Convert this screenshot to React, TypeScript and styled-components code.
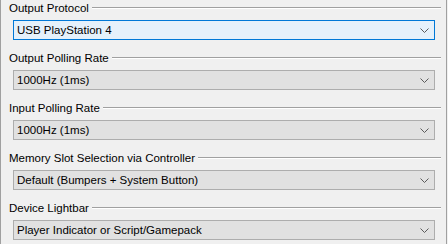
import { FC } from "react"
import styled, { createGlobalStyle } from "styled-components"

type Option = {
	label: string
	value: string
	focused?: boolean
}

type SelectBoxProps = {
	focused?: boolean
}

const options: Option[] = [
	{ label: "Output Protocol", value: "USB PlayStation 4", focused: true },
	{ label: "Output Polling Rate", value: "1000Hz (1ms)" },
	{ label: "Input Polling Rate", value: "1000Hz (1ms)" },
	{ label: "Memory Slot Selection via Controller", value: "Default (Bumpers + System Button)" },
	{ label: "Device Lightbar", value: "Player Indicator or Script/Gamepack" },
]

const Chevron: FC = () => (
	<svg width="9" height="5" viewBox="0 0 9 5">
		<polyline points="0.5,0.5 4.5,4.5 8.5,0.5" fill="none" stroke="#5a5a5a" strokeWidth="1" />
	</svg>
)

const App: FC = () => {
	return (
		<>
			<GlobalStyle />
			<Panel>
				{options.map(opt => (
					<Section key={opt.label}>
						<GroupHeader>
							<GroupLabel>{opt.label}</GroupLabel>
							<Etched />
						</GroupHeader>
						<SelectBox focused={opt.focused}>
							<SelectText>{opt.value}</SelectText>
							<Chevron />
						</SelectBox>
					</Section>
				))}
			</Panel>
		</>
	)
}

const GlobalStyle = createGlobalStyle`
	html, body {
		margin: 0;
		padding: 0;
		background: #f0f0f0;
	}
	body {
		font-family: "Liberation Sans", Arial, sans-serif;
		font-size: 11.5px;
		color: #000;
	}
`

const Panel = styled.div`
	width: 445px;
	height: 244px;
	overflow: hidden;
	border-left: 1px solid #a0a0a0;
	border-right: 1px solid #a0a0a0;
	display: flex;
	flex-direction: column;
`

const Section = styled.div`
	height: 50px;
	flex-shrink: 0;
	display: flex;
	flex-direction: column;
`

const GroupHeader = styled.div`
	height: 16px;
	display: flex;
	align-items: center;
	padding-left: 8px;
	padding-right: 5px;
`

const GroupLabel = styled.span`
	white-space: nowrap;
	line-height: 16px;
`

const Etched = styled.div`
	flex: 1;
	height: 0;
	margin-left: 3px;
	border-top: 1px solid #a0a0a0;
	border-bottom: 1px solid #ffffff;
`

const SelectBox = styled.div<SelectBoxProps>`
	margin-top: 4px;
	margin-left: 12px;
	width: 422px;
	height: 20px;
	box-sizing: border-box;
	display: flex;
	align-items: center;
	justify-content: space-between;
	padding: 0 5px 0 3px;
	background: ${props => (props.focused ? "#e5f1fb" : "#e1e1e1")};
	border: 1px solid ${props => (props.focused ? "#0078d7" : "#adadad")};
`

const SelectText = styled.span`
	white-space: nowrap;
	line-height: 18px;
`

export default App
